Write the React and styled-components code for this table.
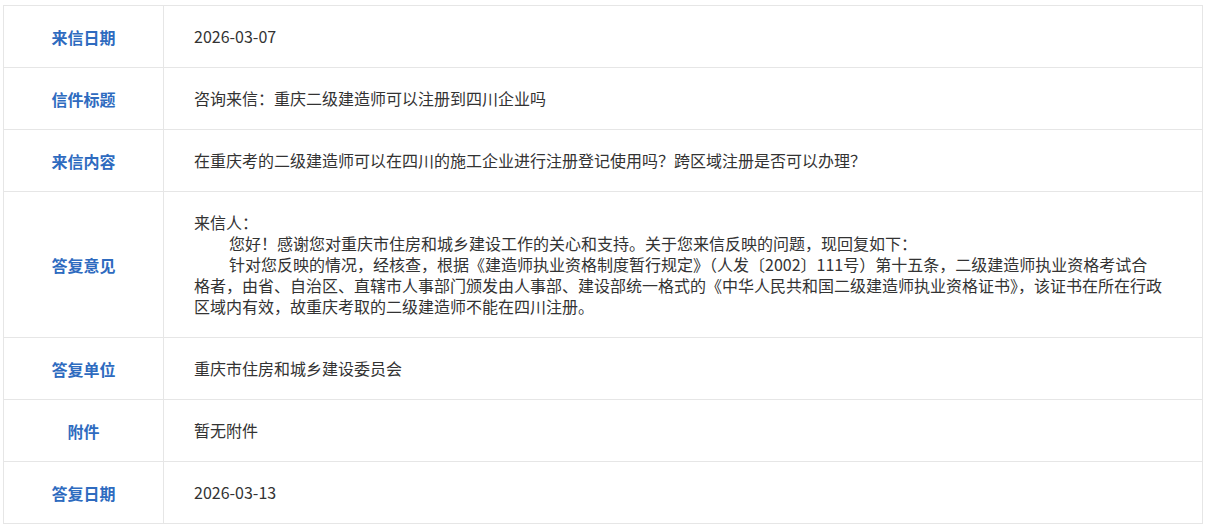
import React from "react";
import styled, { createGlobalStyle } from "styled-components";

const GlobalStyle = createGlobalStyle`
  body {
    margin: 0;
    background: #ffffff;
    font-family: "Noto Sans CJK SC", "Noto Sans", sans-serif;
  }
`;

const Wrapper = styled.div`
  padding: 5px 0 0 3px;
`;

const Table = styled.table`
  width: 1200px;
  border-collapse: collapse;
  table-layout: fixed;
`;

const Row = styled.tr`
  height: 62px;
`;

const LabelCell = styled.th`
  width: 159px;
  border: 1px solid #e6e6e6;
  color: #2e6bbf;
  font-size: 16px;
  font-weight: 700;
  text-align: center;
  vertical-align: middle;
  padding: 0;
`;

const ValueCell = styled.td`
  border: 1px solid #e6e6e6;
  color: #333333;
  font-size: 16px;
  line-height: 21px;
  text-align: left;
  vertical-align: middle;
  padding: ${(p) => (p.$tall ? "20px 30px" : "0 30px")};
`;

const Para = styled.div`
  padding-left: ${(p) => (p.$indent ? "35px" : "0")};
  white-space: nowrap;
`;

const rows = [
  { label: "来信日期", value: "2026-03-07" },
  { label: "信件标题", value: "咨询来信：重庆二级建造师可以注册到四川企业吗" },
  {
    label: "来信内容",
    value:
      "在重庆考的二级建造师可以在四川的施工企业进行注册登记使用吗？跨区域注册是否可以办理？",
  },
  { label: "答复意见", answer: true },
  { label: "答复单位", value: "重庆市住房和城乡建设委员会" },
  { label: "附件", value: "暂无附件" },
  { label: "答复日期", value: "2026-03-13" },
];

const Answer = () => (
  <>
    <Para>来信人：</Para>
    <Para $indent>
      您好！感谢您对重庆市住房和城乡建设工作的关心和支持。关于您来信反映的问题，现回复如下：
    </Para>
    <Para $indent>
      针对您反映的情况，经核查，根据《建造师执业资格制度暂行规定》（人发〔2002〕111号）第十五条，二级建造师执业资格考试合
    </Para>
    <Para>
      格者，由省、自治区、直辖市人事部门颁发由人事部、建设部统一格式的《中华人民共和国二级建造师执业资格证书》，该证书在所在行政
    </Para>
    <Para>区域内有效，故重庆考取的二级建造师不能在四川注册。</Para>
  </>
);

export default function App() {
  return (
    <>
      <GlobalStyle />
      <Wrapper>
        <Table>
          <tbody>
            {rows.map((r) => (
              <Row key={r.label}>
                <LabelCell>{r.label}</LabelCell>
                <ValueCell $tall={r.answer}>
                  {r.answer ? <Answer /> : r.value}
                </ValueCell>
              </Row>
            ))}
          </tbody>
        </Table>
      </Wrapper>
    </>
  );
}
